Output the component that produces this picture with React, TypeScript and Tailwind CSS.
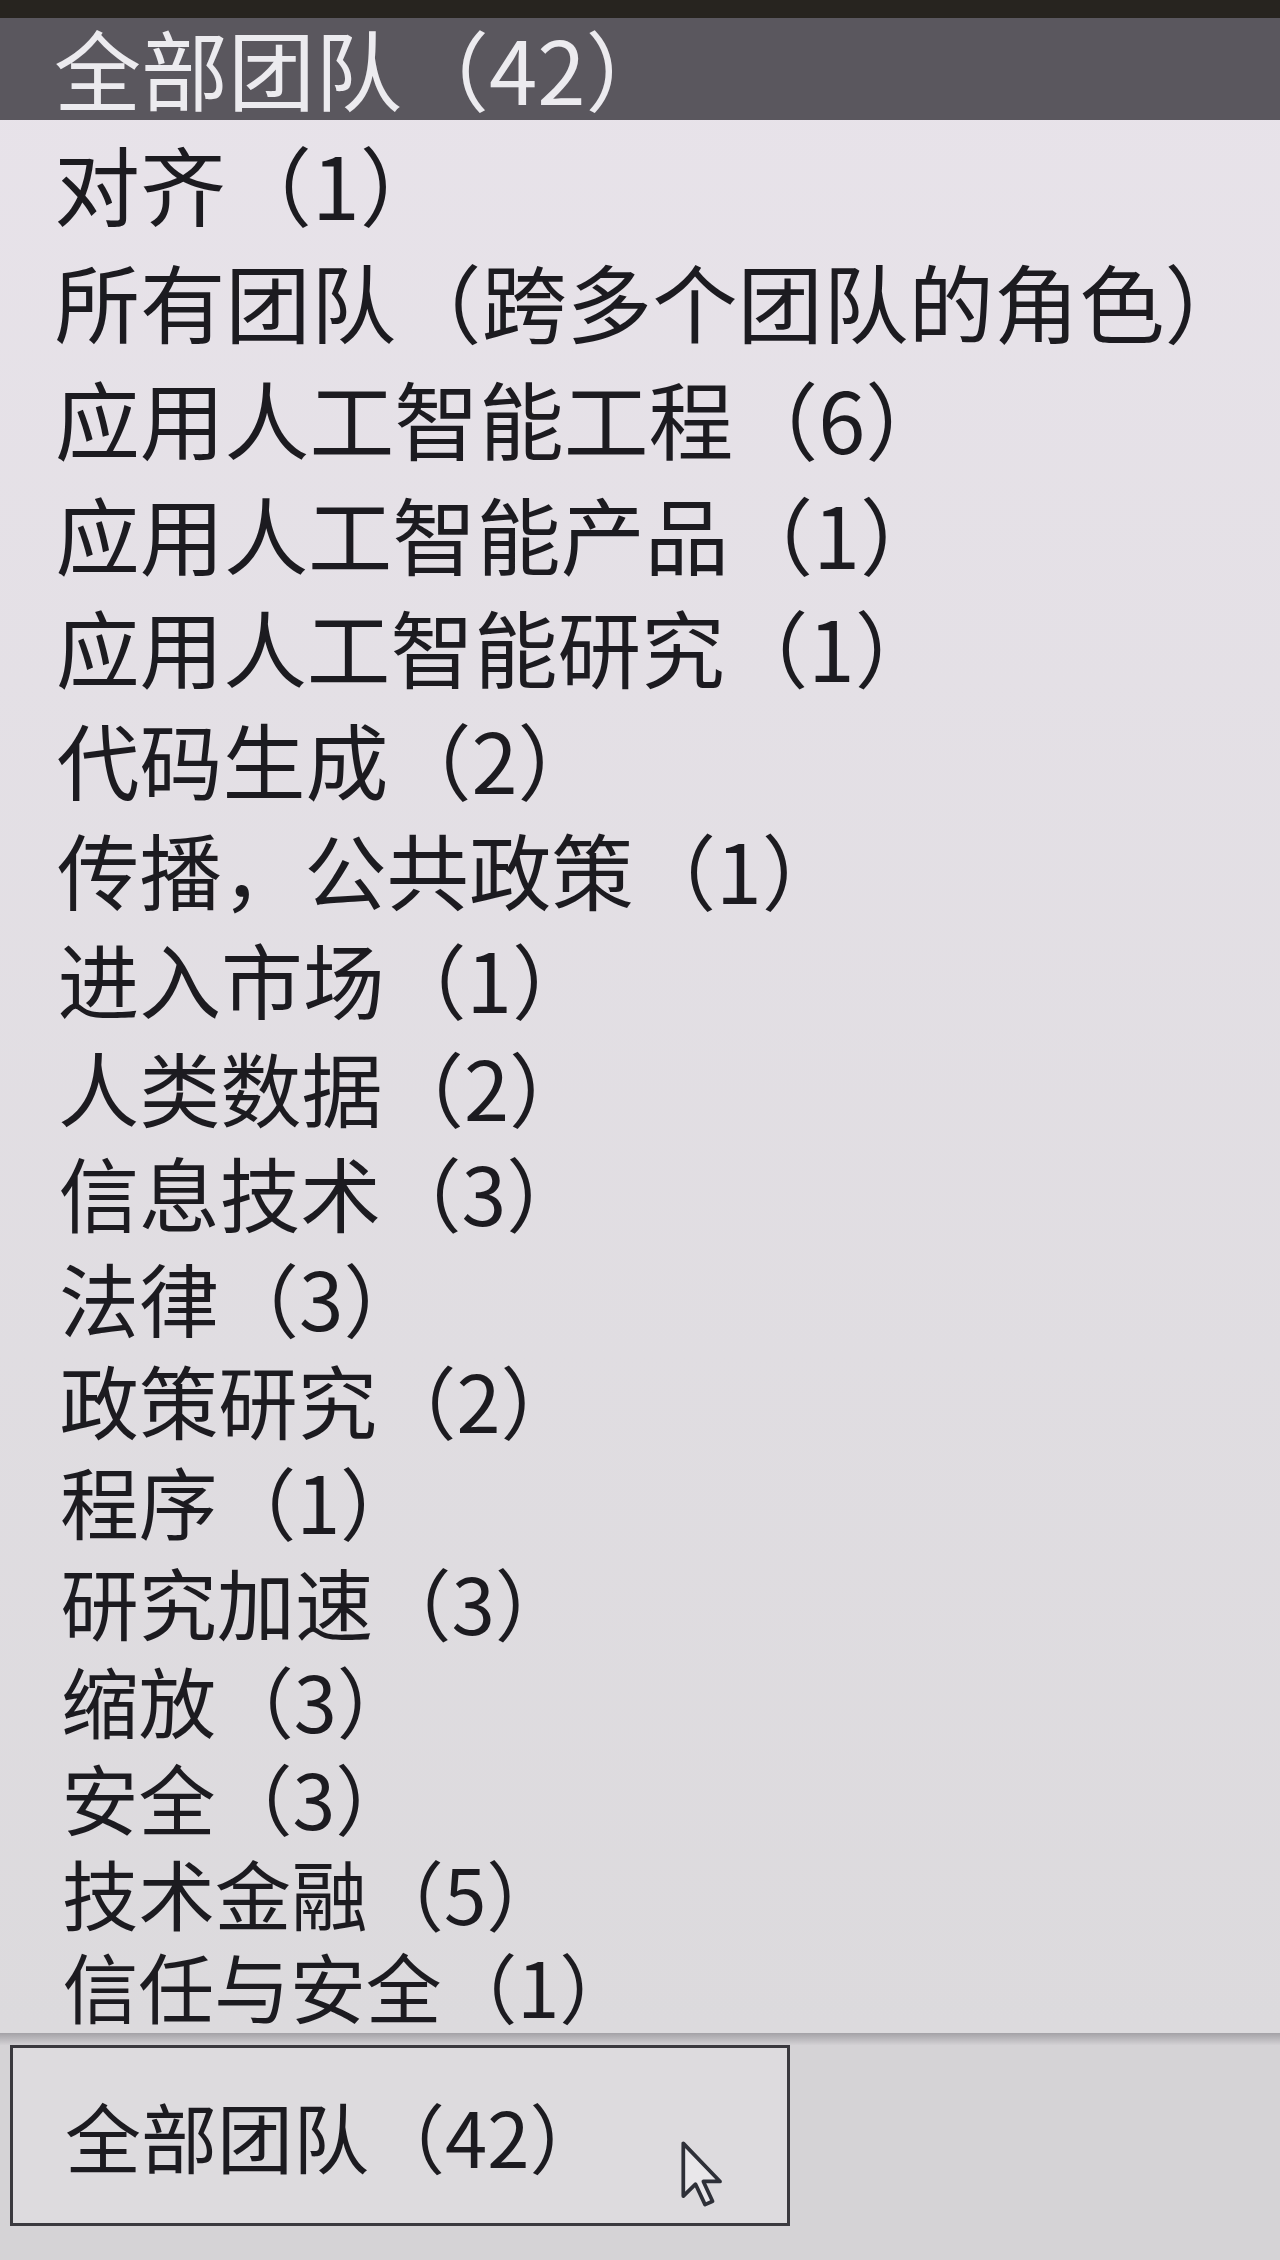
import React from "react";

/**
 * Native-looking team filter dropdown, opened, with the highlighted
 * "all teams" option on top and the closed select box underneath.
 */
type Team = { name: string; count?: number };

const teams: Team[] = [
  { name: "对齐", count: 1 },
  { name: "所有团队（跨多个团队的角色）" },
  { name: "应用人工智能工程", count: 6 },
  { name: "应用人工智能产品", count: 1 },
  { name: "应用人工智能研究", count: 1 },
  { name: "代码生成", count: 2 },
  { name: "传播，公共政策", count: 1 },
  { name: "进入市场", count: 1 },
  { name: "人类数据", count: 2 },
  { name: "信息技术", count: 3 },
  { name: "法律", count: 3 },
  { name: "政策研究", count: 2 },
  { name: "程序", count: 1 },
  { name: "研究加速", count: 3 },
  { name: "缩放", count: 3 },
  { name: "安全", count: 3 },
  { name: "技术金融", count: 5 },
  { name: "信任与安全", count: 1 },
];

const total = 42;

function label(t: Team) {
  return t.count === undefined ? t.name : `${t.name}（${t.count}）`;
}

function Cursor() {
  return (
    <svg
      className="absolute left-[666px] top-[92px] h-[68px] w-[46px]"
      viewBox="0 0 13 20"
      fill="none"
    >
      <path
        d="M1 1 L1 16.5 L4.6 13 L7.4 19 L9.6 18 L6.9 12.2 L11.8 12.2 Z"
        fill="#e9e7ea"
        stroke="#2e3038"
        strokeWidth="1.1"
        strokeLinejoin="round"
      />
    </svg>
  );
}

export default function App() {
  return (
    <div className="flex h-[2260px] w-[1280px] flex-col overflow-hidden bg-[#d5d3d6] font-['Noto_Sans_CJK_SC','Noto_Sans',sans-serif] text-[#1c1b20]">
      <div className="h-[18px] shrink-0 bg-[#27241f]" />

      <div className="flex flex-col bg-linear-to-b from-[#e8e3ea] to-[#dcdadd]">
        <div className="flex h-[102px] items-center bg-[#5a575e] pl-[54px] pb-[4px] text-[87px] leading-none text-[#ecebef]">
          全部团队（{total}）
        </div>

        {/* rows shrink slightly toward the bottom, as in the photographed screen */}
        {teams.map((t, i) => (
          <div
            key={t.name}
            className="flex items-center whitespace-nowrap leading-none"
            style={{
              height: 119 - 1.5 * i,
              fontSize: 86 - 0.6 * i,
              paddingLeft: 54 + 0.5 * i,
              paddingTop: 6 - 0.3 * i,
            }}
          >
            {label(t)}
          </div>
        ))}
      </div>

      <div className="h-[12px] shrink-0 bg-linear-to-b from-[#a3a1a6] to-[#d3d1d4]" />

      <div className="relative ml-[10px] flex h-[181px] w-[780px] shrink-0 items-center border-[3px] border-[#3a393e] bg-[#dddbde] pl-[52px] text-[76px] leading-none">
        全部团队（{total}）
        <Cursor />
      </div>
    </div>
  );
}
